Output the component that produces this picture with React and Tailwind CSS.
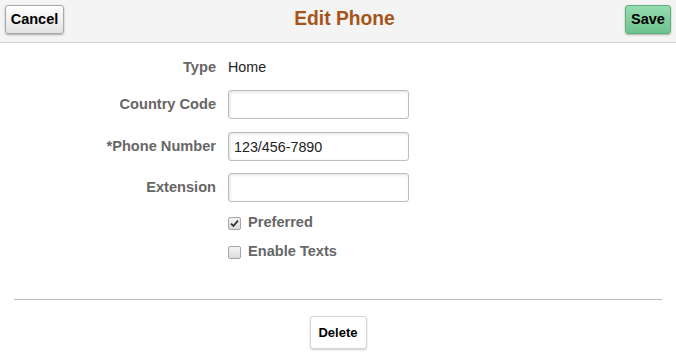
import React, { useState } from "react";

const Checkbox = ({ checked, onChange }) => (
    <button
        type="button"
        onClick={onChange}
        className="w-[13px] h-[13px] shrink-0 rounded-[2px] border border-[#a6a6a6] bg-gradient-to-b from-[#f4f4f4] to-[#dcdcdc] flex items-center justify-center p-0"
    >
        {checked && (
            <svg width="9" height="9" viewBox="0 0 9 9">
                <path d="M1 4.6 L3.4 7 L8 1.6" fill="none" stroke="#333" strokeWidth="1.8" />
            </svg>
        )}
    </button>
);

const EditPhone = () => {
    const [countryCode, setCountryCode] = useState("");
    const [phone, setPhone] = useState("123/456-7890");
    const [extension, setExtension] = useState("");
    const [preferred, setPreferred] = useState(true);
    const [enableTexts, setEnableTexts] = useState(false);

    const labelClasses = "w-[216px] shrink-0 text-right text-[14.6px] font-bold text-[#666666]";
    const inputClasses = "ml-3 w-[181px] h-[29px] rounded-[3px] border border-[#bdbdbd] bg-white px-[5px] text-[14.3px] text-[#222] outline-none shadow-[inset_1px_1px_3px_rgba(0,0,0,0.12)]";

    return (
        <div className="w-[676px] h-[359px] bg-white font-['Liberation_Sans',Arial,sans-serif] overflow-hidden">
            {/* Header */}
            <div className="h-[43px] bg-[#f4f4f4] border-b border-[#cfcfcf] flex items-start px-[5px] pt-[5px]">
                <button className="h-[29px] w-[59px] rounded-[3px] border border-[#a9a9a9] bg-gradient-to-b from-white to-[#e2e2e2] text-[14.5px] font-bold text-black shadow-[0_1px_2px_rgba(0,0,0,0.3)]">
                    Cancel
                </button>
                <h1 className="flex-1 text-center text-[19.3px] leading-[26px] mt-[1px] font-bold text-[#a5541b]">
                    Edit Phone
                </h1>
                <button className="h-[29px] w-[46px] rounded-[3px] border border-[#5fae7c] bg-gradient-to-b from-[#95dcaf] to-[#6cc48d] text-[14.5px] font-bold text-black shadow-[0_1px_2px_rgba(0,0,0,0.3)]">
                    Save
                </button>
            </div>

            {/* Form */}
            <div className="flex flex-col pt-[15px]">
                <div className="flex items-center h-[20px]">
                    <span className={labelClasses}>Type</span>
                    <span className="ml-3 text-[14.3px] text-[#222]">Home</span>
                </div>

                <div className="flex items-center mt-[12px]">
                    <label className={labelClasses}>Country Code</label>
                    <input className={inputClasses} value={countryCode} onChange={(e) => setCountryCode(e.target.value)} />
                </div>

                <div className="flex items-center mt-[13px]">
                    <label className={labelClasses}>*Phone Number</label>
                    <input className={inputClasses} value={phone} onChange={(e) => setPhone(e.target.value)} />
                </div>

                <div className="flex items-center mt-[12px]">
                    <label className={labelClasses}>Extension</label>
                    <input className={inputClasses} value={extension} onChange={(e) => setExtension(e.target.value)} />
                </div>

                <div className="flex items-center h-[20px] mt-[11px] ml-[228px]">
                    <Checkbox checked={preferred} onChange={() => setPreferred(!preferred)} />
                    <span className="ml-[7px] text-[14.6px] font-bold text-[#666666]">Preferred</span>
                </div>

                <div className="flex items-center h-[20px] mt-[9px] ml-[228px]">
                    <Checkbox checked={enableTexts} onChange={() => setEnableTexts(!enableTexts)} />
                    <span className="ml-[7px] text-[14.6px] font-bold text-[#666666]">Enable Texts</span>
                </div>
            </div>

            {/* Footer */}
            <div className="mx-[14px] mt-[37px] border-t border-[#bdbdbd] flex justify-center pt-[16px]">
                <button className="h-[33px] w-[57px] rounded-[3px] border border-[#d6d6d6] bg-white text-[13px] font-bold text-black shadow-[0_1px_2px_rgba(0,0,0,0.2)]">
                    Delete
                </button>
            </div>
        </div>
    );
};

export default EditPhone;
